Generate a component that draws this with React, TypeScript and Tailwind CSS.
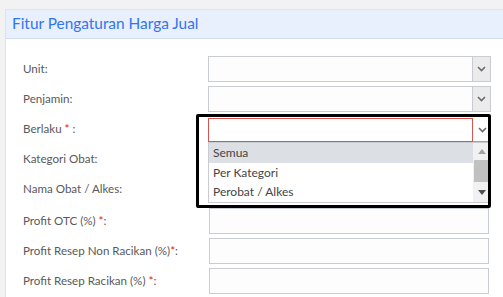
import React from "react";

function Chevron() {
  return (
    <svg width="9" height="6" viewBox="0 0 9 6" fill="none">
      <path d="M1 1l3.5 3.5L8 1" stroke="#6b6b6b" strokeWidth="1.6" />
    </svg>
  );
}

function SelectBox() {
  return (
    <div className="flex h-[26px] w-[283px] border border-[#c9cdd2] bg-[#fdfdfd]">
      <div className="flex-1" />
      <div className="flex w-[18px] items-center justify-center border-l border-[#c9cdd2] bg-[#ebebeb]">
        <Chevron />
      </div>
    </div>
  );
}

function TextBox() {
  return <div className="ml-px h-[26px] w-[280px] border border-[#c9cdd2] bg-[#fdfdfd]" />;
}

function Label({ text, req, tail }: { text: string; req?: boolean; tail?: string }) {
  return (
    <div className="w-[185px] text-[11.6px] text-[#595959]">
      {text}
      {req && <span className="text-[#e02020]">*</span>}
      {tail}
    </div>
  );
}

function BerlakuField() {
  return (
    <div className="relative flex h-[26px] w-[283px] items-end">
      <div className="flex h-[24px] w-full">
        <div className="flex-1 border border-[#d9534f] bg-white" />
        <div className="flex w-[18px] items-center justify-center border-b border-[#7fa7e0] bg-white">
          <Chevron />
        </div>
      </div>
      <div className="absolute left-0 top-full z-10 flex h-[61px] w-[283px] border border-[#c9cdd2] bg-white text-[12px] text-[#444]">
        <div className="flex flex-1 flex-col">
          <div className="flex h-[20px] items-center bg-[#dcdfe3] pl-[4px]">Semua</div>
          <div className="flex h-[20px] items-center pl-[4px]">Per Kategori</div>
          <div className="flex h-[20px] items-center pl-[4px]">Perobat / Alkes</div>
        </div>
        <div className="flex w-[17px] flex-col bg-[#f1f1f1]">
          <div className="flex h-[17px] items-center justify-center">
            <svg width="8" height="5" viewBox="0 0 8 5"><path d="M0 5L4 0l4 5z" fill="#a3a3a3" /></svg>
          </div>
          <div className="mx-[1px] h-[22px] bg-[#c1c1c1]" />
          <div className="flex flex-1 items-center justify-center">
            <svg width="8" height="5" viewBox="0 0 8 5"><path d="M0 0h8L4 5z" fill="#505050" /></svg>
          </div>
        </div>
      </div>
      <div className="pointer-events-none absolute left-[-12px] top-[-2px] z-20 h-[94px] w-[295px] rounded-[2px] border-[3px] border-black" />
    </div>
  );
}

export default function App() {
  return (
    <div className="min-h-screen overflow-hidden bg-[#f2f2f2] pl-[5px] pt-[9px] font-['Lato',sans-serif]">
      <div className="h-[300px] border-l border-t border-[#dfe4ec] bg-white">
        <div className="flex h-[29px] items-center border-b border-[#d3dcec] bg-[#e8f0fd] pl-[6px] text-[15.4px] text-[#3274f2]">
          Fitur Pengaturan Harga Jual
        </div>
        <div className="flex flex-col gap-[4px] pl-[17px] pt-[17px]">
          <div className="flex h-[26px] items-center">
            <Label text="Unit:" />
            <SelectBox />
          </div>
          <div className="flex h-[26px] items-center">
            <Label text="Penjamin:" />
            <SelectBox />
          </div>
          <div className="flex h-[26px] items-center">
            <Label text="Berlaku " req tail=" :" />
            <BerlakuField />
          </div>
          <div className="flex h-[26px] items-center">
            <Label text="Kategori Obat:" />
          </div>
          <div className="flex h-[26px] items-center">
            <Label text="Nama Obat / Alkes:" />
          </div>
          <div className="mt-[2px] flex h-[26px] items-center">
            <Label text="Profit OTC (%) " req tail=":" />
            <TextBox />
          </div>
          <div className="flex h-[26px] items-center">
            <Label text="Profit Resep Non Racikan (%)" req tail=":" />
            <TextBox />
          </div>
          <div className="flex h-[26px] items-center">
            <Label text="Profit Resep Racikan (%) " req tail=":" />
            <TextBox />
          </div>
        </div>
      </div>
    </div>
  );
}
